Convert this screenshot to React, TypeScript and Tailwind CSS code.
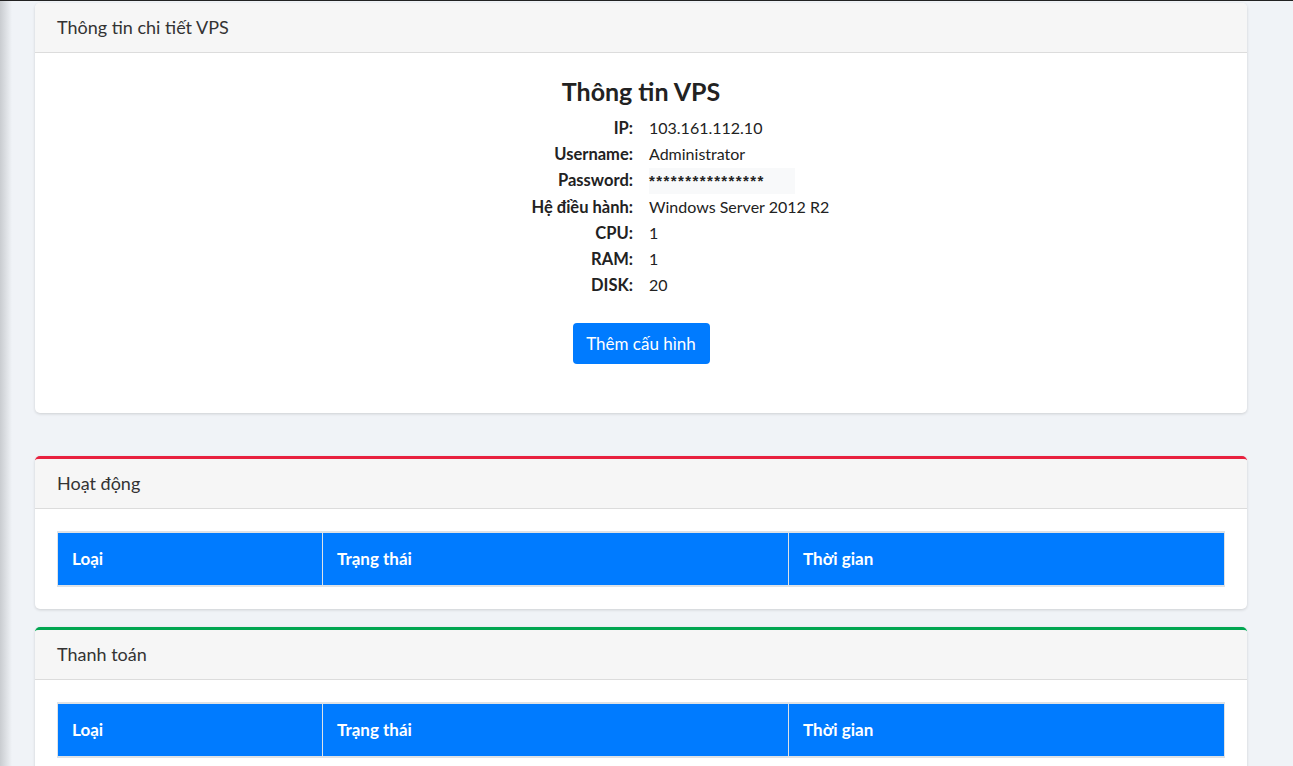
import React from "react"

const details = [
  { label: "IP:", value: "103.161.112.10" },
  { label: "Username:", value: "Administrator" },
  { label: "Password:", value: "****************", secret: true },
  { label: "Hệ điều hành:", value: "Windows Server 2012 R2" },
  { label: "CPU:", value: "1" },
  { label: "RAM:", value: "1" },
  { label: "DISK:", value: "20" },
]

function Card({
  title,
  accent,
  children,
}: {
  title: string
  accent?: string
  children: React.ReactNode
}) {
  return (
    <div
      className={`shrink-0 bg-white rounded-[5px] shadow-[0_1px_3px_rgba(0,0,0,0.15)] overflow-hidden ${
        accent ?? ""
      }`}
    >
      <div className="h-[50px] flex items-center px-[22px] bg-[#f6f6f6] border-b border-[#dcdcdc] text-[18px] text-[#333]">
        {title}
      </div>
      {children}
    </div>
  )
}

function LogTable() {
  return (
    <div className="grid grid-cols-[264px_465px_1fr] border-y-2 border-x border-[#dee2e6] bg-[#dee2e6] gap-x-px text-white text-[17px] font-bold">
      <div className="h-[52px] flex items-center px-[14px] bg-[#007bff]">Loại</div>
      <div className="h-[52px] flex items-center px-[14px] bg-[#007bff]">Trạng thái</div>
      <div className="h-[52px] flex items-center px-[14px] bg-[#007bff]">Thời gian</div>
    </div>
  )
}

export default function App() {
  return (
    <div className="h-[766px] bg-[#f0f3f7] border-t border-[#222] flex font-['Lato','Noto_Sans',sans-serif] overflow-hidden">
      <div className="w-[12px] shrink-0 bg-gradient-to-r from-[#c9ccd0] to-[#f0f3f7]" />
      <div className="flex-1 pl-[23px] pr-[46px] pt-[2px] flex flex-col">
        <Card title="Thông tin chi tiết VPS">
          <div className="pt-[24px] pb-[49px] flex flex-col items-center">
            <h2 className="text-[25px] font-bold text-[#222] leading-[29px] mb-[9px]">Thông tin VPS</h2>
            <div className="w-full grid grid-cols-2 gap-x-4 text-[16px] text-[#222]">
              {details.map((d) => (
                <React.Fragment key={d.label}>
                  <div className="text-right font-bold text-[16.5px] leading-[26px]">{d.label}</div>
                  <div className="leading-[26px]">
                    {d.secret ? (
                      <span className="inline-block w-[146px] bg-[#f8f9fa] font-bold text-[15px] tracking-[1.4px] font-['Liberation_Sans',sans-serif]">
                        {d.value}
                      </span>
                    ) : (
                      d.value
                    )}
                  </div>
                </React.Fragment>
              ))}
            </div>
            <button className="mt-[25px] h-[41px] w-[137px] rounded-[4px] bg-[#007bff] text-white text-[17px]">
              Thêm cấu hình
            </button>
          </div>
        </Card>

        <div className="mt-[43px] shrink-0">
          <Card title="Hoạt động" accent="border-t-[3px] border-[#e8213f]">
            <div className="px-[22px] pt-[22px] pb-[22px]">
              <LogTable />
            </div>
          </Card>
        </div>

        <div className="mt-[18px] shrink-0">
          <Card title="Thanh toán" accent="border-t-[3px] border-[#00a651]">
            <div className="px-[22px] pt-[22px] pb-[22px]">
              <LogTable />
            </div>
          </Card>
        </div>
      </div>
    </div>
  )
}
